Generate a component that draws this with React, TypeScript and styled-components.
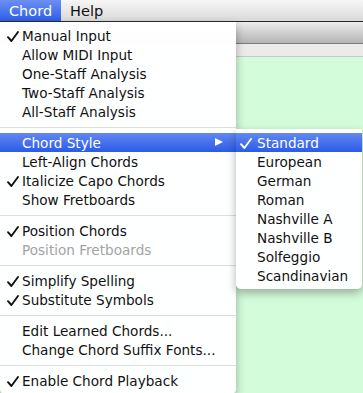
import { ReactElement } from "react";
import styled, { createGlobalStyle } from "styled-components";

const GlobalStyle = createGlobalStyle`
  html, body {
    margin: 0;
    padding: 0;
    width: 363px;
    height: 393px;
    overflow: hidden;
    font-family: "DejaVu Sans", "Liberation Sans", sans-serif;
  }
`;

const Page = styled.div`
  position: relative;
  width: 363px;
  height: 393px;
  display: flex;
  flex-direction: column;
  background: #d3fcda;
`;

const MenuBar = styled.div`
  height: 21px;
  display: flex;
  align-items: stretch;
  background: linear-gradient(#f6f6f6, #d9d9d9);
  border-bottom: 1px solid #2a2a2a;
  box-sizing: content-box;
`;

const MenuTitle = styled.div<{ $active?: boolean }>`
  display: flex;
  align-items: center;
  padding: 0 9px;
  font-size: 14.5px;
  color: ${(p) => (p.$active ? "#fff" : "#111")};
  background: ${(p) =>
    p.$active ? "linear-gradient(#6d8ff3, #2c5ee8)" : "transparent"};
`;

const Toolbar = styled.div`
  height: 21px;
  background: linear-gradient(#ececec, #b4b4b4);
  border-bottom: 1px solid #7a7a7a;
`;

const Band = styled.div`
  height: 12px;
  background: #ebebeb;
  border-bottom: 1px solid #c9c9c9;
`;

const Canvas = styled.div`
  flex: 1;
  background: #d3fcda;
`;

const Dropdown = styled.div<{ $left: number; $top: number; $width: number }>`
  position: absolute;
  left: ${(p) => p.$left}px;
  top: ${(p) => p.$top}px;
  width: ${(p) => p.$width}px;
  padding: 4px 0;
  background: rgba(255, 255, 255, 0.98);
  border-radius: 0 0 5px 5px;
  box-shadow: 0 4px 10px rgba(0, 0, 0, 0.3);
`;

const Item = styled.div<{ $active?: boolean; $disabled?: boolean; $indent: number }>`
  position: relative;
  height: 19px;
  display: flex;
  align-items: center;
  padding-left: ${(p) => p.$indent}px;
  font-size: 13.6px;
  white-space: nowrap;
  color: ${(p) => (p.$active ? "#fff" : p.$disabled ? "#a3a3a3" : "#111")};
  background: ${(p) =>
    p.$active ? "linear-gradient(#6388f2, #2a5be8)" : "transparent"};
`;

const Check = styled.svg<{ $left: number }>`
  position: absolute;
  left: ${(p) => p.$left}px;
  top: 5px;
  width: 12px;
  height: 11px;
`;

const Arrow = styled.span`
  position: absolute;
  right: 13px;
  top: 5px;
  width: 0;
  height: 0;
  border-top: 4.5px solid transparent;
  border-bottom: 4.5px solid transparent;
  border-left: 8px solid #fff;
`;

const Separator = styled.div`
  height: 12px;
  display: flex;
  align-items: center;

  &::after {
    content: "";
    flex: 1;
    height: 1px;
    background: #dedede;
  }
`;

type Entry =
  | { sep: true }
  | { label: string; checked?: boolean; active?: boolean; disabled?: boolean; sub?: boolean };

const chordMenu: Entry[] = [
  { label: "Manual Input", checked: true },
  { label: "Allow MIDI Input" },
  { label: "One-Staff Analysis" },
  { label: "Two-Staff Analysis" },
  { label: "All-Staff Analysis" },
  { sep: true },
  { label: "Chord Style", active: true, sub: true },
  { label: "Left-Align Chords" },
  { label: "Italicize Capo Chords", checked: true },
  { label: "Show Fretboards" },
  { sep: true },
  { label: "Position Chords", checked: true },
  { label: "Position Fretboards", disabled: true },
  { sep: true },
  { label: "Simplify Spelling", checked: true },
  { label: "Substitute Symbols", checked: true },
  { sep: true },
  { label: "Edit Learned Chords..." },
  { label: "Change Chord Suffix Fonts..." },
  { sep: true },
  { label: "Enable Chord Playback", checked: true },
];

const styleMenu: Entry[] = [
  { label: "Standard", checked: true, active: true },
  { label: "European" },
  { label: "German" },
  { label: "Roman" },
  { label: "Nashville A" },
  { label: "Nashville B" },
  { label: "Solfeggio" },
  { label: "Scandinavian" },
];

const CheckMark = ({ left }: { left: number }) => (
  <Check $left={left} viewBox="0 0 12 11">
    <path
      d="M1 6.2 L4.4 10 L11 1"
      fill="none"
      stroke="currentColor"
      strokeWidth="1.9"
      strokeLinecap="round"
      strokeLinejoin="round"
    />
  </Check>
);

const renderEntries = (entries: Entry[], indent: number, checkLeft: number) =>
  entries.map((e, i) =>
    "sep" in e ? (
      <Separator key={i} />
    ) : (
      <Item key={i} $indent={indent} $active={e.active} $disabled={e.disabled}>
        {e.checked && <CheckMark left={checkLeft} />}
        {e.label}
        {e.sub && <Arrow />}
      </Item>
    )
  );

export default function App(): ReactElement {
  return (
    <Page>
      <GlobalStyle />
      <MenuBar>
        <MenuTitle $active>Chord</MenuTitle>
        <MenuTitle>Help</MenuTitle>
      </MenuBar>
      <Toolbar />
      <Band />
      <Canvas />
      <Dropdown $left={0} $top={22} $width={236}>
        {renderEntries(chordMenu, 22, 7)}
      </Dropdown>
      <Dropdown $left={236} $top={129} $width={126}>
        {renderEntries(styleMenu, 21, 4)}
      </Dropdown>
    </Page>
  );
}
